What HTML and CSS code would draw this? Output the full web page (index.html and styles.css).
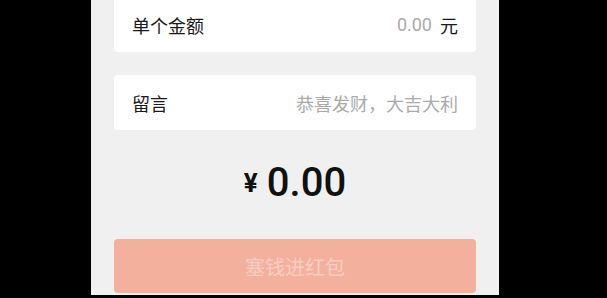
FILE: index.html
```html
<!DOCTYPE html>
<html lang="zh-CN">
<head>
    <meta charset="UTF-8">
    <meta name="viewport" content="width=device-width, initial-scale=1.0">
    <title>发红包</title>
    <link rel="stylesheet" href="styles.css">
</head>
<body>
    <div class="page">
        <div class="field first">
            <span class="label">单个金额</span>
            <span class="value"><span class="amount-input">0.00</span><span class="unit">元</span></span>
        </div>

        <div class="field">
            <span class="label">留言</span>
            <span class="placeholder">恭喜发财，大吉大利</span>
        </div>

        <div class="total">
            <span class="yen">¥</span><span class="sum">0.00</span>
        </div>

        <button class="send-btn" disabled>塞钱进红包</button>
    </div>
</body>
</html>
```

FILE: styles.css
```css
html, body {
    margin: 0;
    padding: 0;
    background: #000;
    height: 100%;
    overflow: hidden;
}

body {
    font-family: "Noto Sans CJK SC", "Noto Sans", sans-serif;
}

.page {
    width: 408px;
    height: 100%;
    margin-left: 91px;
    background: #f0f0f0;
    padding: 0 23px;
    box-sizing: border-box;
}

.field {
    height: 55px;
    background: #fff;
    border-radius: 4px;
    display: flex;
    align-items: center;
    justify-content: space-between;
    padding: 0 18px;
    margin-bottom: 23px;
    font-size: 18px;
}

.field.first {
    margin-top: -3px;
}

.label {
    color: #1a1a1a;
}

.value {
    display: flex;
    align-items: center;
}

.amount-input {
    color: #aaa;
    font-family: Roboto, "Noto Sans", sans-serif;
    font-size: 18px;
}

.unit {
    color: #1a1a1a;
    margin-left: 8px;
}

.placeholder {
    color: #aaa;
}

.total {
    display: flex;
    justify-content: center;
    align-items: flex-start;
    height: 86px;
    padding-top: 10px;
    box-sizing: border-box;
    color: #111;
}

.yen {
    font-family: Roboto, sans-serif;
    font-weight: bold;
    font-size: 26px;
    line-height: 1;
    margin-top: 7px;
    margin-right: 9px;
}

.sum {
    font-family: Roboto, sans-serif;
    font-weight: 500;
    font-size: 40px;
    line-height: 1;
}

.send-btn {
    display: block;
    width: 100%;
    height: 54px;
    border: none;
    border-radius: 4px;
    background: #f3b09d;
    color: rgba(255, 255, 255, 0.4);
    font-family: "Noto Sans CJK SC", sans-serif;
    font-size: 20px;
    padding: 0;
}
```
